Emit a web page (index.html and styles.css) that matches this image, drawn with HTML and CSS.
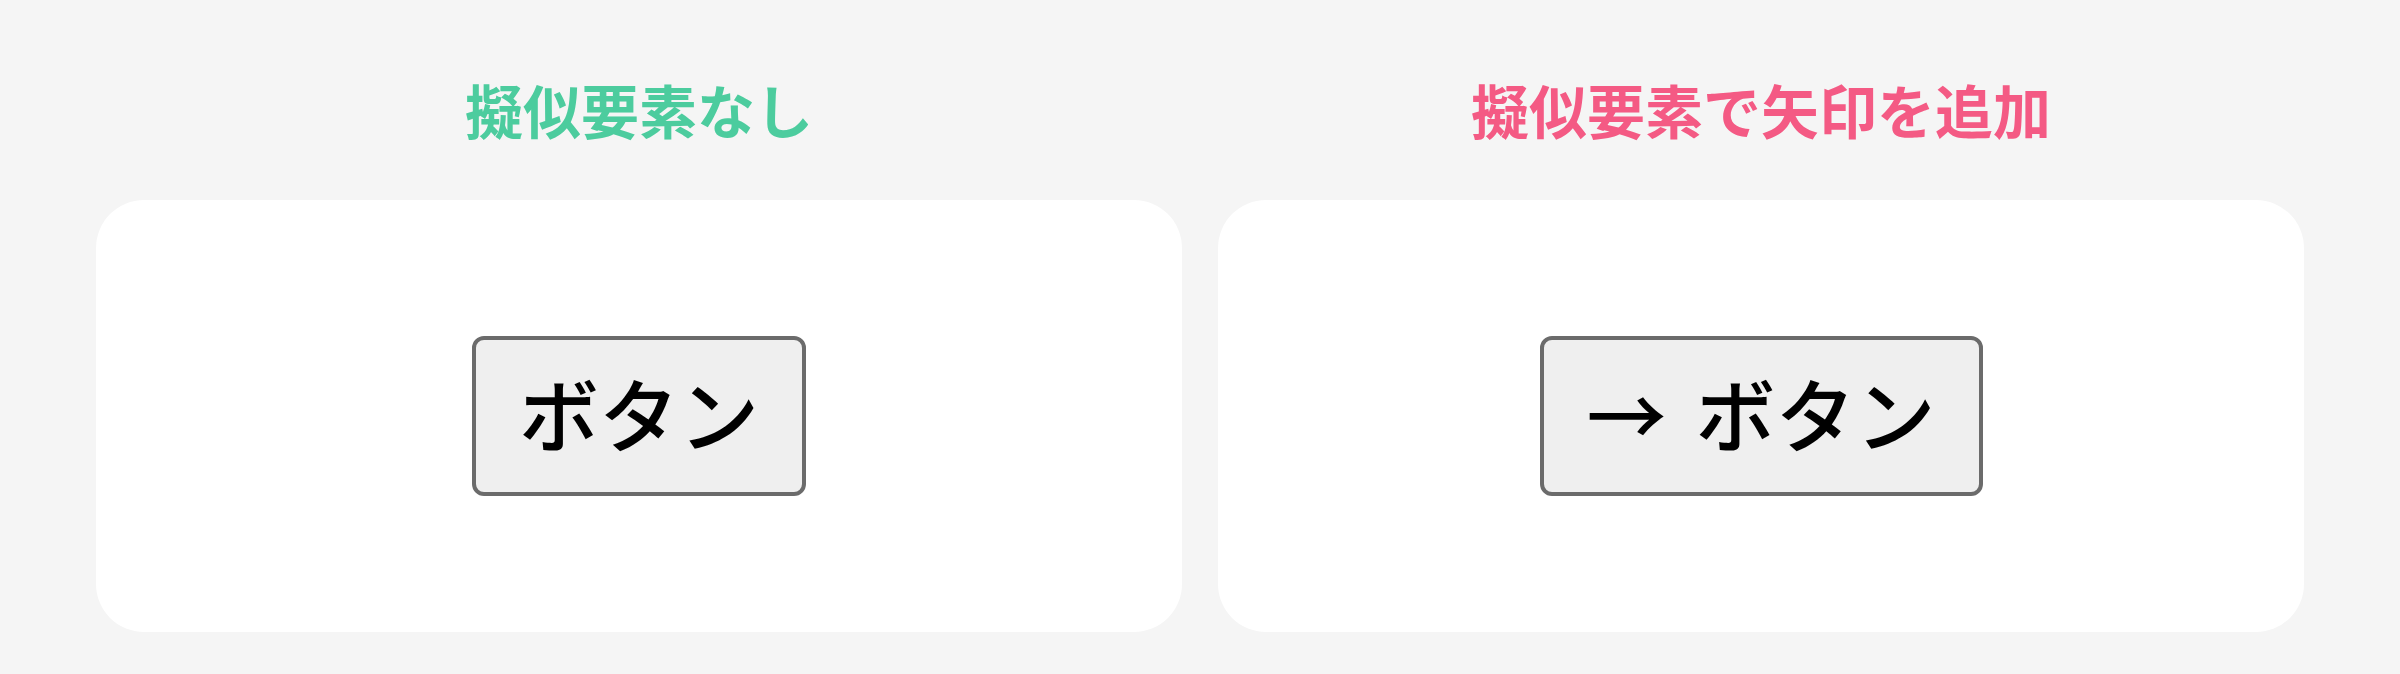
FILE: index.html
```html
<!DOCTYPE html>
<html lang="ja">

<head>
    <meta charset="UTF-8">
    <meta name="viewport" content="width=device-width, initial-scale=1.0">
    <title>擬似要素のサンプル</title>
    <link rel="stylesheet" href="styles.css">
</head>

<body>
    <div class="compare">
        <section class="sample">
            <h2 class="sample_title plain">擬似要素なし</h2>
            <div class="sample_box">
                <button class="btn">ボタン</button>
            </div>
        </section>
        <section class="sample">
            <h2 class="sample_title arrow">擬似要素で矢印を追加</h2>
            <div class="sample_box">
                <button class="btn btn_arrow">ボタン</button>
            </div>
        </section>
    </div>
</body>

</html>
```

FILE: styles.css
```css
* {
    margin: 0;
    padding: 0;
    box-sizing: border-box;
}

body {
    background: #f5f5f5;
    font-family: "Noto Sans CJK JP", "Noto Sans", sans-serif;
}

.compare {
    display: grid;
    grid-template-columns: 1fr 1fr;
    column-gap: 36px;
    padding: 80px 96px 0;
}

.sample {
    display: flex;
    flex-flow: column;
}

.sample_title {
    font-size: 58px;
    font-weight: bold;
    line-height: 58px;
    text-align: center;
    margin-bottom: 62px;
}

.sample_title.plain {
    color: #4ccc9e;
}

.sample_title.arrow {
    color: #f45a84;
}

.sample_box {
    height: 432px;
    display: flex;
    justify-content: center;
    align-items: center;
    background: white;
    border-radius: 48px;
}

.btn {
    font-family: inherit;
    font-size: 80px;
    font-weight: 500;
    line-height: 120px;
    padding: 11px 43px 21px;
    color: black;
    background: #efefef;
    border: solid 4px #6b6b6b;
    border-radius: 12px;
}

/* arrow put in front of the label */
.btn_arrow::before {
    content: "→ ";
    margin-right: 11px;
}
```
